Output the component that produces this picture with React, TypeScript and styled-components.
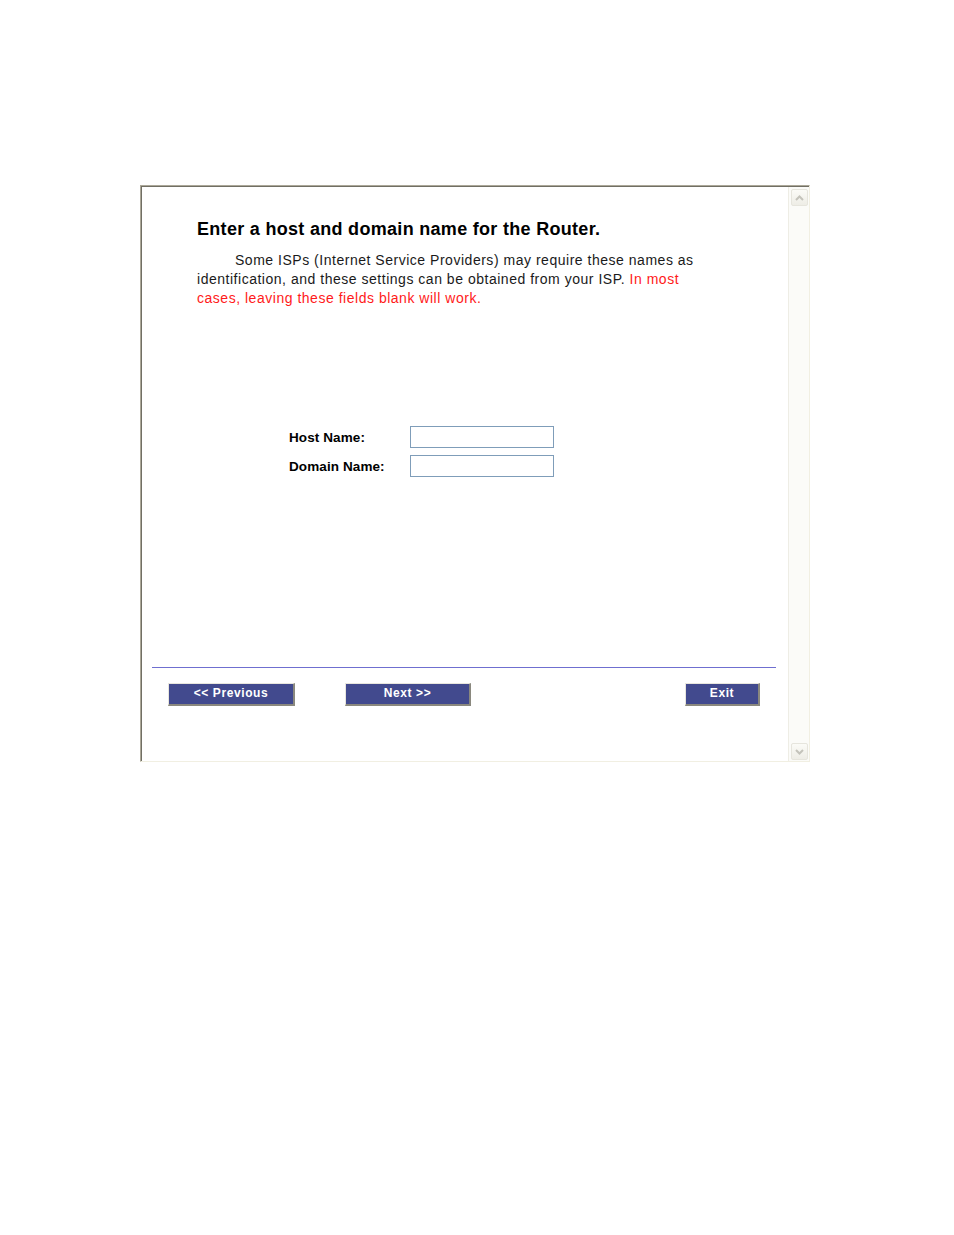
import styled, { createGlobalStyle } from 'styled-components';

const GlobalStyle = createGlobalStyle`
    html, body {
        margin: 0;
        padding: 0;
        background: #ffffff;
    }
    body {
        font-family: "Liberation Sans", Arial, sans-serif;
    }
`;

const Page = styled.div`
    width: 954px;
    height: 1235px;
    padding: 185px 0 0 140px;
    box-sizing: border-box;
`;

const Frame = styled.div`
    display: flex;
    width: 670px;
    height: 577px;
    box-sizing: border-box;
    border-top: 1px solid #aca899;
    border-left: 1px solid #aca899;
    border-bottom: 1px solid #f1efe2;
    border-right: 1px solid #f1efe2;
    background: #ffffff;
`;

const Inner = styled.div`
    display: flex;
    flex: 1;
    border-top: 1px solid #716f64;
    border-left: 1px solid #716f64;
`;

const Content = styled.div`
    flex: 1;
    display: flex;
    flex-direction: column;
    padding: 32px 0 0 10px;
`;

const Intro = styled.div`
    padding-left: 45px;
    width: 502px;
`;

const Title = styled.h1`
    margin: 0;
    font-size: 18px;
    line-height: 21px;
    font-weight: bold;
    letter-spacing: 0.3px;
    color: #000000;
`;

const Text = styled.p`
    margin: 11px 0 0;
    font-size: 14px;
    line-height: 19px;
    letter-spacing: 0.52px;
    color: #1a1a1a;
    text-indent: 38px;
`;

const Warn = styled.span`
    color: #ff1a1a;
`;

const Form = styled.div`
    display: grid;
    grid-template-columns: 121px 144px;
    row-gap: 7px;
    margin: 118px 0 0 137px;
    align-items: center;
`;

const Label = styled.label`
    font-size: 13.5px;
    font-weight: bold;
    letter-spacing: 0.1px;
    color: #000000;
`;

const Field = styled.input`
    width: 144px;
    height: 22px;
    box-sizing: border-box;
    border: 1px solid #7f9db9;
    padding: 2px 3px;
    font-family: "Liberation Sans", Arial, sans-serif;
    font-size: 12px;
    outline: none;
`;

const Rule = styled.div`
    margin-top: 190px;
    width: 624px;
    height: 1px;
    background: #6f6fd0;
`;

const Buttons = styled.div`
    display: flex;
    align-items: center;
    margin-top: 15px;
    padding-left: 16px;
    width: 608px;
`;

const NavButton = styled.button<{ $width: number; $gap?: number }>`
    width: ${(p) => p.$width}px;
    height: 23px;
    margin-left: ${(p) => p.$gap ?? 0}px;
    box-sizing: border-box;
    background: #424a8e;
    color: #ffffff;
    font-family: "Liberation Sans", Arial, sans-serif;
    font-size: 12px;
    font-weight: bold;
    letter-spacing: 0.6px;
    padding: 0 0 2px;
    border-top: 1px solid #e8e6de;
    border-left: 1px solid #e8e6de;
    border-right: 2px solid #8a887e;
    border-bottom: 2px solid #8a887e;
    cursor: pointer;
`;

const Scrollbar = styled.div`
    width: 20px;
    display: flex;
    flex-direction: column;
    justify-content: space-between;
    align-items: center;
    padding: 2px 0 1px;
    background: #fbfbf8;
    border-left: 1px solid #eeede5;
`;

const Arrow = styled.div`
    width: 17px;
    height: 17px;
    box-sizing: border-box;
    border: 1px solid #e6e5dd;
    border-radius: 2px;
    background: linear-gradient(#fbfbf7, #eeede6);
    display: flex;
    align-items: center;
    justify-content: center;
`;

function Chevron({ up }: { up: boolean }) {
    return (
        <svg width="9" height="6" viewBox="0 0 9 6">
            <path
                d={up ? 'M1 5 L4.5 1.5 L8 5' : 'M1 1 L4.5 4.5 L8 1'}
                fill="none"
                stroke="#c4c3bb"
                strokeWidth="2"
            />
        </svg>
    );
}

export default function App() {
    return (
        <>
            <GlobalStyle />
            <Page>
                <Frame>
                    <Inner>
                        <Content>
                            <Intro>
                                <Title>Enter a host and domain name for the Router.</Title>
                                <Text>
                                    Some ISPs (Internet Service Providers) may require these names as
                                    identification, and these settings can be obtained from your ISP.{' '}
                                    <Warn>In most cases, leaving these fields blank will work.</Warn>
                                </Text>
                            </Intro>
                            <Form>
                                <Label>Host Name:</Label>
                                <Field type="text" />
                                <Label>Domain Name:</Label>
                                <Field type="text" />
                            </Form>
                            <Rule />
                            <Buttons>
                                <NavButton $width={127}>&lt;&lt; Previous</NavButton>
                                <NavButton $width={126} $gap={50}>Next &gt;&gt;</NavButton>
                                <NavButton $width={75} $gap={214}>Exit</NavButton>
                            </Buttons>
                        </Content>
                        <Scrollbar>
                            <Arrow><Chevron up /></Arrow>
                            <Arrow><Chevron up={false} /></Arrow>
                        </Scrollbar>
                    </Inner>
                </Frame>
            </Page>
        </>
    );
}
